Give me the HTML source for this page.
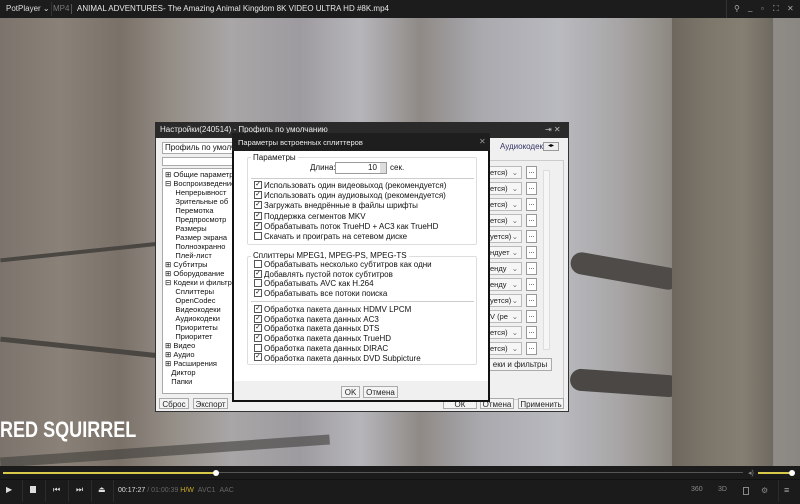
<!DOCTYPE html>
<html><head><meta charset="utf-8"><style>
*{margin:0;padding:0;box-sizing:border-box}
body{width:800px;height:504px;overflow:hidden;position:relative;font-family:"Liberation Sans",sans-serif;background:#8a8682}
.a{position:absolute}
.bg{left:0;top:18px;width:800px;height:450px;background:
linear-gradient(90deg,#7c746c 0,#8a8278 60px,#7a7168 120px,#948d86 170px,#a8a6a6 230px,#9e9ba0 300px,#b6b6ba 360px,#8f8a86 420px,#a9a9ae 480px,#b9babf 560px,#a7a5a5 620px,#8e8982 670px,#7c766c 680px,#817a70 760px,#8f8b86 775px,#8a8680 800px)}
.t{font-size:8px;color:#111;white-space:nowrap;line-height:10px}
.cb{width:8px;height:8px;border:1px solid #555;background:#fff;display:inline-block;vertical-align:middle;margin:-2px 2px 0 0;font-size:7px;line-height:6px;text-align:center;overflow:hidden}
.btn{border:1px solid #aaa;background:#f4f4f4;font-size:8px;text-align:center;line-height:11px;color:#222}
.row{position:absolute;left:489px;width:33px;height:13px;border:1px solid #bbb;border-left:none;background:#f6f6f6;font-size:7.5px;line-height:11px;color:#222;overflow:hidden;white-space:nowrap;padding-left:1px}
.row i{position:absolute;right:3px;top:0;font-style:normal;color:#666;background:#f6f6f6}
.dot{position:absolute;left:526px;width:11px;height:13px;border:1px solid #999;background:#fff;font-size:7px;line-height:9px;text-align:center}
.ic{position:absolute;top:486px;font-size:7px;color:#888}
</style></head><body>
<div class="a bg"></div>
<div class="a" style="left:0;top:345px;width:160px;height:5px;background:#4a4642;transform:rotate(6deg)"></div>
<div class="a" style="left:0;top:250px;width:160px;height:4px;background:#4a4642;transform:rotate(-6deg)"></div>
<div class="a" style="left:570px;top:260px;width:110px;height:22px;border-radius:12px;background:#4e4b48;transform:rotate(10deg)"></div>
<div class="a" style="left:570px;top:372px;width:110px;height:22px;border-radius:12px;background:#4a4744;transform:rotate(4deg)"></div>
<div class="a" style="left:0;top:446px;width:330px;height:10px;background:#3f3d3a;transform:rotate(-4deg);opacity:.6"></div>
<div class="a" style="left:672px;top:18px;width:101px;height:450px;background:linear-gradient(90deg,#6d675e,#7e786c 40%,#857e72 70%,#6f6a61)"></div>
<div class="a" style="left:0;top:417px;font-family:'Liberation Sans Narrow','Liberation Sans',sans-serif;font-weight:bold;font-size:22px;color:#fff;transform:scaleX(.82);transform-origin:left">RED SQUIRREL</div>
<div class="a" style="left:0;top:0;width:800px;height:18px;background:#1c1c1c"></div>
<div class="a" style="left:6px;top:4px;font-size:8px;color:#ddd">PotPlayer ⌄</div>
<div class="a" style="left:51px;top:2px;width:1px;height:14px;background:#333"></div>
<div class="a" style="left:53px;top:4px;font-size:8px;color:#777">MP4</div>
<div class="a" style="left:71px;top:4px;width:1px;height:10px;background:#555"></div>
<div class="a" style="left:77px;top:4px;font-size:8px;color:#e8e8e8">ANIMAL ADVENTURES- The Amazing Animal Kingdom 8K VIDEO ULTRA HD #8K.mp4</div>
<div class="a" style="left:726px;top:0;width:1px;height:18px;background:#333"></div>
<div class="a" style="left:734px;top:4px;font-size:8px;color:#aaa">⚲</div>
<div class="a" style="left:748px;top:3px;font-size:8px;color:#aaa">_</div>
<div class="a" style="left:761px;top:4px;font-size:8px;color:#aaa">▫</div>
<div class="a" style="left:773px;top:4px;font-size:8px;color:#aaa">⛶</div>
<div class="a" style="left:787px;top:4px;font-size:8px;color:#aaa">✕</div>
<div class="a" style="left:155px;top:122px;width:414px;height:290px;background:#f0f0f0;border:1px solid #333"></div>
<div class="a" style="left:155px;top:122px;width:414px;height:16px;background:#2a2a2a"></div>
<div class="a" style="left:160px;top:125px;font-size:8px;color:#eee">Настройки(240514) - Профиль по умолчанию</div>
<div class="a" style="left:545px;top:125px;font-size:8px;color:#bbb">⇥ ✕</div>
<div class="a" style="left:162px;top:142px;width:72px;height:12px;background:#fff;border:1px solid #aaa"></div>
<div class="a t" style="left:165px;top:143px">Профиль по умолчан</div>
<div class="a" style="left:162px;top:157px;width:72px;height:9px;background:#fff;border:1px solid #aaa"></div>
<div class="a" style="left:162px;top:168px;width:72px;height:226px;background:#fff;border:1px solid #aaa;overflow:hidden"></div>
<div class="a t" style="left:165px;top:170px;line-height:9px;font-size:7.5px">⊞ Общие параметры<br>⊟ Воспроизведение<br>&nbsp;&nbsp;&nbsp;&nbsp;&nbsp;Непрерывност<br>&nbsp;&nbsp;&nbsp;&nbsp;&nbsp;Зрительные об<br>&nbsp;&nbsp;&nbsp;&nbsp;&nbsp;Перемотка<br>&nbsp;&nbsp;&nbsp;&nbsp;&nbsp;Предпросмотр<br>&nbsp;&nbsp;&nbsp;&nbsp;&nbsp;Размеры<br>&nbsp;&nbsp;&nbsp;&nbsp;&nbsp;Размер экрана<br>&nbsp;&nbsp;&nbsp;&nbsp;&nbsp;Полноэкранно<br>&nbsp;&nbsp;&nbsp;&nbsp;&nbsp;Плей-лист<br>⊞ Субтитры<br>⊞ Оборудование<br>⊟ Кодеки и фильтры<br>&nbsp;&nbsp;&nbsp;&nbsp;&nbsp;Сплиттеры<br>&nbsp;&nbsp;&nbsp;&nbsp;&nbsp;OpenCodec<br>&nbsp;&nbsp;&nbsp;&nbsp;&nbsp;Видеокодеки<br>&nbsp;&nbsp;&nbsp;&nbsp;&nbsp;Аудиокодеки<br>&nbsp;&nbsp;&nbsp;&nbsp;&nbsp;Приоритеты<br>&nbsp;&nbsp;&nbsp;&nbsp;&nbsp;Приоритет<br>⊞ Видео<br>⊞ Аудио<br>⊞ Расширения<br>&nbsp;&nbsp;&nbsp;Диктор<br>&nbsp;&nbsp;&nbsp;Папки</div>
<div class="a t" style="left:500px;top:142px;color:#336">Аудиокодек</div>
<div class="a" style="left:543px;top:142px;width:16px;height:9px;background:#eee;border:1px solid #999;font-size:6px;line-height:7px;text-align:center">◂▸</div>
<div class="a" style="left:488px;top:160px;width:76px;height:240px;border:1px solid #ccc"></div>
<div class="row" style="top:166px">ется)<i>⌄</i></div><div class="dot" style="top:166px">...</div>
<div class="row" style="top:182px">ется)<i>⌄</i></div><div class="dot" style="top:182px">...</div>
<div class="row" style="top:198px">ется)<i>⌄</i></div><div class="dot" style="top:198px">...</div>
<div class="row" style="top:214px">ется)<i>⌄</i></div><div class="dot" style="top:214px">...</div>
<div class="row" style="top:230px">уется)<i>⌄</i></div><div class="dot" style="top:230px">...</div>
<div class="row" style="top:246px">ндует<i>⌄</i></div><div class="dot" style="top:246px">...</div>
<div class="row" style="top:262px">енду<i>⌄</i></div><div class="dot" style="top:262px">...</div>
<div class="row" style="top:278px">енду<i>⌄</i></div><div class="dot" style="top:278px">...</div>
<div class="row" style="top:294px">уется)<i>⌄</i></div><div class="dot" style="top:294px">...</div>
<div class="row" style="top:310px">V (ре<i>⌄</i></div><div class="dot" style="top:310px">...</div>
<div class="row" style="top:326px">ется)<i>⌄</i></div><div class="dot" style="top:326px">...</div>
<div class="row" style="top:342px">ется)<i>⌄</i></div><div class="dot" style="top:342px">...</div>
<div class="a" style="left:543px;top:170px;width:7px;height:180px;background:#f6f6f6;border:1px solid #ddd"></div>
<div class="a btn" style="left:488px;top:358px;width:64px;height:13px">еки и фильтры</div>
<div class="a btn" style="left:159px;top:398px;width:30px;height:11px">Сброс</div>
<div class="a btn" style="left:193px;top:398px;width:35px;height:11px">Экспорт</div>
<div class="a btn" style="left:443px;top:398px;width:34px;height:11px">ОК</div>
<div class="a btn" style="left:480px;top:398px;width:34px;height:11px">Отмена</div>
<div class="a btn" style="left:518px;top:398px;width:46px;height:11px">Применить</div>
<div class="a" style="left:232px;top:133px;width:258px;height:269px;background:#fff;border:2px solid #111"></div>
<div class="a" style="left:232px;top:133px;width:258px;height:18px;background:#1e1e1e"></div>
<div class="a" style="left:238px;top:138px;font-size:7.5px;color:#eee">Параметры встроенных сплиттеров</div>
<div class="a" style="left:479px;top:137px;font-size:8px;color:#999">✕</div>
<div class="a" style="left:234px;top:381px;width:254px;height:19px;background:#f0f0f0"></div>
<div class="a btn" style="left:341px;top:386px;width:19px;height:12px">OK</div>
<div class="a btn" style="left:363px;top:386px;width:35px;height:12px">Отмена</div>
<div class="a" style="left:247px;top:157px;width:230px;height:88px;border:1px solid #ddd;border-radius:2px"></div>
<div class="a t" style="left:251px;top:153px;background:#fff;padding:0 2px">Параметры</div>
<div class="a t" style="left:310px;top:163px">Длина:</div>
<div class="a" style="left:335px;top:162px;width:52px;height:12px;border:1px solid #999;background:#fff"></div>
<div class="a t" style="left:368px;top:163px">10</div>
<div class="a" style="left:380px;top:163px;width:6px;height:10px;background:#ddd"></div>
<div class="a t" style="left:390px;top:163px">сек.</div>
<div class="a" style="left:251px;top:178px;width:223px;height:1px;background:#ccc"></div>
<div class="a t" style="left:254px;top:181px;line-height:10.2px">
<span class="cb">✓</span>Использовать один видеовыход (рекомендуется)<br>
<span class="cb">✓</span>Использовать один аудиовыход (рекомендуется)<br>
<span class="cb">✓</span>Загружать внедрённые в файлы шрифты<br>
<span class="cb">✓</span>Поддержка сегментов MKV<br>
<span class="cb">✓</span>Обрабатывать поток TrueHD + AC3 как TrueHD<br>
<span class="cb"></span>Скачать и проиграть на сетевом диске</div>
<div class="a" style="left:247px;top:256px;width:230px;height:109px;border:1px solid #ddd;border-radius:2px"></div>
<div class="a t" style="left:251px;top:251px;background:#fff;padding:0 2px">Сплиттеры MPEG1, MPEG-PS, MPEG-TS</div>
<div class="a t" style="left:254px;top:260px;line-height:9.7px">
<span class="cb"></span>Обрабатывать несколько субтитров как одни<br>
<span class="cb">✓</span>Добавлять пустой поток субтитров<br>
<span class="cb"></span>Обрабатывать AVC как H.264<br>
<span class="cb">✓</span>Обрабатывать все потоки поиска</div>
<div class="a" style="left:251px;top:301px;width:223px;height:1px;background:#ccc"></div>
<div class="a t" style="left:254px;top:305px;line-height:9.7px">
<span class="cb">✓</span>Обработка пакета данных HDMV LPCM<br>
<span class="cb">✓</span>Обработка пакета данных AC3<br>
<span class="cb">✓</span>Обработка пакета данных DTS<br>
<span class="cb">✓</span>Обработка пакета данных TrueHD<br>
<span class="cb"></span>Обработка пакета данных DIRAC<br>
<span class="cb">✓</span>Обработка пакета данных DVD Subpicture</div>
<div class="a" style="left:0;top:466px;width:800px;height:38px;background:#1b1b1b"></div>
<div class="a" style="left:3px;top:472px;width:740px;height:1px;background:#555"></div>
<div class="a" style="left:3px;top:472px;width:213px;height:2px;background:#d8c94a"></div>
<div class="a" style="left:213px;top:470px;width:6px;height:6px;border-radius:50%;background:#fff"></div>
<div class="a" style="left:758px;top:472px;width:34px;height:2px;background:#d8c94a"></div>
<div class="a" style="left:789px;top:470px;width:6px;height:6px;border-radius:50%;background:#fff"></div>
<div class="a" style="left:748px;top:469px;font-size:7px;color:#888">◂)</div>
<div class="a" style="left:0;top:479px;width:800px;height:1px;background:#111"></div>
<div class="a" style="left:6px;top:485px;font-size:8px;color:#ddd">▶</div>
<div class="a" style="left:30px;top:486px;width:6px;height:7px;background:#ddd"></div>
<div class="a" style="left:53px;top:485px;font-size:8px;color:#ddd">⏮</div>
<div class="a" style="left:76px;top:485px;font-size:8px;color:#ddd">⏭</div>
<div class="a" style="left:98px;top:485px;font-size:8px;color:#ddd">⏏</div>
<div class="a" style="left:22px;top:480px;width:1px;height:22px;background:#2c2c2c"></div>
<div class="a" style="left:45px;top:480px;width:1px;height:22px;background:#2c2c2c"></div>
<div class="a" style="left:68px;top:480px;width:1px;height:22px;background:#2c2c2c"></div>
<div class="a" style="left:91px;top:480px;width:1px;height:22px;background:#2c2c2c"></div>
<div class="a" style="left:113px;top:480px;width:1px;height:22px;background:#2c2c2c"></div>
<div class="a" style="left:118px;top:487px;font-size:7px;color:#ddd;white-space:nowrap">00:17:27 <span style="color:#666">/ 01:00:39</span> <span style="color:#c9a92a">H/W</span> &nbsp;<span style="color:#666">AVC1 &nbsp;AAC</span></div>
<div class="ic" style="left:691px">360</div>
<div class="ic" style="left:718px">3D</div>
<div class="ic" style="left:743px;top:487px;width:6px;height:8px;border:1px solid #888"></div>
<div class="ic" style="left:761px;font-size:8px">⚙</div>
<div class="a" style="left:778px;top:480px;width:1px;height:22px;background:#2c2c2c"></div>
<div class="a" style="left:784px;top:485px;font-size:9px;color:#aaa">≡</div>
</body></html>
